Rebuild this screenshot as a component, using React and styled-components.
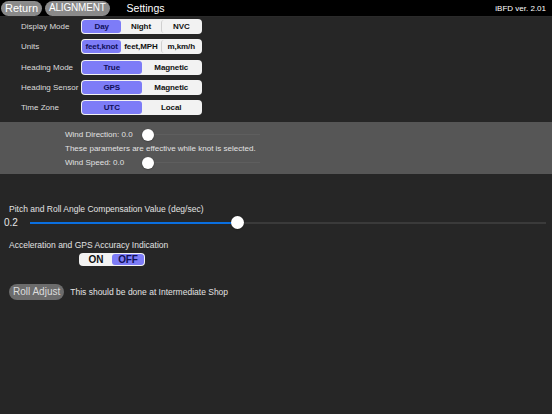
import React from 'react'
import styled, { createGlobalStyle } from 'styled-components'

const GlobalStyle = createGlobalStyle`
  html, body {
    margin: 0;
    padding: 0;
    background: #262626;
    font-family: "Liberation Sans", Arial, sans-serif;
    color: #e6e6e6;
  }
`

const Page = styled.div`
  width: 552px;
  height: 414px;
  background: #262626;
  overflow: hidden;
`

const TopBar = styled.header`
  height: 16px;
  background: #000;
  border-bottom: 1px solid #2a2a2a;
  display: flex;
  align-items: center;
  padding: 0 6px 0 1px;
`

const PillButton = styled.button`
  height: ${p => p.$h || 15}px;
  padding: 0 ${p => p.$pad || 4}px;
  margin-right: ${p => p.$mr || 0}px;
  border: none;
  border-radius: 8px;
  background: ${p => p.$bg || '#8a8a8a'};
  color: ${p => p.$color || '#fff'};
  font-family: inherit;
  font-size: ${p => p.$fs || 11}px;
  letter-spacing: ${p => p.$ls || 0}px;
  line-height: 1;
  display: flex;
  align-items: center;
`

const Title = styled.span`
  font-size: 10.5px;
  color: #fff;
  margin-left: 17px;
  flex: 1;
`

const Version = styled.span`
  font-size: 8px;
  color: #fff;
`

const SettingsList = styled.div`
  display: flex;
  flex-direction: column;
  gap: 5.3px;
  padding: 2px 0 0 21px;
`

const Row = styled.div`
  display: flex;
  align-items: center;
  height: 15px;
`

const Label = styled.span`
  width: 60px;
  font-size: 8px;
  color: #dcdcdc;
  white-space: nowrap;
`

const Segmented = styled.div`
  display: flex;
  width: ${p => p.$w}px;
  height: ${p => p.$h || 15}px;
  box-sizing: border-box;
  background: #f2f2f2;
  border-radius: 4px;
  padding: 1px;
`

const Segment = styled.div`
  flex: 1;
  display: flex;
  align-items: center;
  justify-content: center;
  font-size: ${p => p.$fs || 8}px;
  font-weight: bold;
  white-space: nowrap;
  letter-spacing: -0.1px;
  color: ${p => (p.$active ? '#10105a' : '#111')};
  background: ${p => (p.$active ? '#7d7cf7' : 'transparent')};
  border-radius: 3px;
  border-left: ${p => (p.$divider ? '1px solid #d0d0d0' : 'none')};
`

const Panel = styled.div`
  margin-top: 6.5px;
  background: #565656;
  height: 52px;
  box-sizing: border-box;
  padding: 6px 0 0 65px;
  display: flex;
  flex-direction: column;
`

const PanelRow = styled.div`
  display: flex;
  align-items: center;
  height: 14px;
  font-size: 8px;
  color: #e2e2e2;
`

const PanelLabel = styled.span`
  width: 77px;
  white-space: nowrap;
`

const Slider = styled.div`
  position: relative;
  width: ${p => p.$w}px;
  height: ${p => p.$th || 2}px;
  background: ${p => p.$track || '#646464'};
`

const SliderFill = styled.div`
  height: 100%;
  background: #0a6fe0;
`

const Thumb = styled.div`
  position: absolute;
  top: 50%;
  width: ${p => p.$d}px;
  height: ${p => p.$d}px;
  margin-left: ${p => -p.$d / 2}px;
  margin-top: ${p => -p.$d / 2}px;
  border-radius: 50%;
  background: #fff;
  box-shadow: 0 0.5px 1.5px rgba(0, 0, 0, 0.4);
`

const Section = styled.div`
  padding: 0 0 0 9px;
  display: flex;
  flex-direction: column;
`

const SectionLabel = styled.div`
  height: 14px;
  line-height: 14px;
  font-size: 8.5px;
  color: #e2e2e2;
  margin-top: ${p => p.$mt || 0}px;
  white-space: nowrap;
`

const SliderRow = styled.div`
  display: flex;
  align-items: center;
  height: 14px;
  margin-left: -5px;
`

const SliderValue = styled.span`
  width: 26px;
  font-size: 10px;
  color: #e6e6e6;
`

const ToggleWrap = styled.div`
  margin: 1px 0 0 70px;
`

const RollRow = styled.div`
  display: flex;
  align-items: center;
  margin-top: 18px;
  gap: 6px;
`

const Note = styled.span`
  font-size: 8.5px;
  color: #e2e2e2;
`

function SegmentGroup({ items, active, w, h, fs }) {
  return (
    <Segmented $w={w} $h={h}>
      {items.map((t, i) => (
        <Segment
          key={t}
          $active={i === active}
          $fs={fs}
          $divider={i > 0 && i !== active && i - 1 !== active}
        >
          {t}
        </Segment>
      ))}
    </Segmented>
  )
}

function RangeSlider({ w, value, d, track, th }) {
  return (
    <Slider $w={w} $track={track} $th={th}>
      <SliderFill style={{ width: `${value * 100}%` }} />
      <Thumb $d={d} style={{ left: `${value * 100}%` }} />
    </Slider>
  )
}

const settings = [
  { label: 'Display Mode', items: ['Day', 'Night', 'NVC'] },
  { label: 'Units', items: ['feet,knot', 'feet,MPH', 'm,km/h'] },
  { label: 'Heading Mode', items: ['True', 'Magnetic'] },
  { label: 'Heading Sensor', items: ['GPS', 'Magnetic'] },
  { label: 'Time Zone', items: ['UTC', 'Local'] },
]

export default function App() {
  return (
    <Page>
      <GlobalStyle />
      <TopBar>
        <PillButton $mr={3}>Return</PillButton>
        <PillButton $fs={10} $ls={-0.2}>ALIGNMENT</PillButton>
        <Title>Settings</Title>
        <Version>iBFD ver. 2.01</Version>
      </TopBar>

      <SettingsList>
        {settings.map(s => (
          <Row key={s.label}>
            <Label>{s.label}</Label>
            <SegmentGroup items={s.items} active={0} w={121} />
          </Row>
        ))}
      </SettingsList>

      <Panel>
        <PanelRow>
          <PanelLabel>Wind Direction: 0.0</PanelLabel>
          <RangeSlider w={118} value={0.05} d={12} track="#5e5e5e" th={1} />
        </PanelRow>
        <PanelRow>These parameters are effective while knot is selected.</PanelRow>
        <PanelRow>
          <PanelLabel>Wind Speed: 0.0</PanelLabel>
          <RangeSlider w={118} value={0.05} d={12} track="#5e5e5e" th={1} />
        </PanelRow>
      </Panel>

      <Section>
        <SectionLabel $mt={28}>Pitch and Roll Angle Compensation Value (deg/sec)</SectionLabel>
        <SliderRow>
          <SliderValue>0.2</SliderValue>
          <RangeSlider w={516} value={0.402} d={13} track="#3a3a3a" />
        </SliderRow>
        <SectionLabel $mt={8}>Acceleration and GPS Accuracy Indication</SectionLabel>
        <ToggleWrap>
          <SegmentGroup items={['ON', 'OFF']} active={1} w={66} h={13} fs={10} />
        </ToggleWrap>
        <RollRow>
          <PillButton $h={16} $pad={4} $fs={10} $bg="#6c6c6c" $color="#dcdcdc">
            Roll Adjust
          </PillButton>
          <Note>This should be done at Intermediate Shop</Note>
        </RollRow>
      </Section>
    </Page>
  )
}
